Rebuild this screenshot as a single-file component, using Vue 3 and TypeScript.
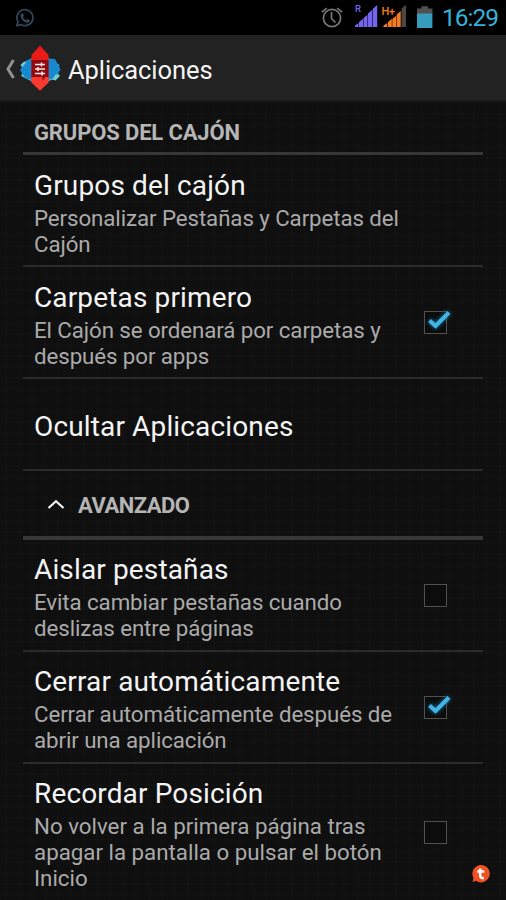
<script setup lang="ts">
interface Pref {
  title: string
  lines?: string[]
  checked?: boolean
}

const drawerPrefs: Pref[] = [
  { title: 'Grupos del cajón', lines: ['Personalizar Pestañas y Carpetas del', 'Cajón'] },
  { title: 'Carpetas primero', lines: ['El Cajón se ordenará por carpetas y', 'después por apps'], checked: true },
  { title: 'Ocultar Aplicaciones' },
]

const advancedPrefs: Pref[] = [
  { title: 'Aislar pestañas', lines: ['Evita cambiar pestañas cuando', 'deslizas entre páginas'], checked: false },
  { title: 'Cerrar automáticamente', lines: ['Cerrar automáticamente después de', 'abrir una aplicación'], checked: true },
  { title: 'Recordar Posición', lines: ['No volver a la primera página tras', 'apagar la pantalla o pulsar el botón', 'Inicio'], checked: false },
]

const groups = [
  { name: 'GRUPOS DEL CAJÓN', advanced: false, prefs: drawerPrefs },
  { name: 'AVANZADO', advanced: true, prefs: advancedPrefs },
]
</script>

<template>
  <div class="screen">
    <div class="status">
      <svg class="whatsapp" width="20" height="20" viewBox="0 0 20 20" fill="none" stroke="#34465c" stroke-width="1.7">
        <path d="M1.9 17.6 3 13.6A8 8 0 1 1 6.2 16.7Z" />
        <path d="M6.2 5.5 7.6 5 9 8 7.9 9.2Q9 11.4 11.2 12.3L12.4 11 15 12.4Q14.6 15 12 14.8C8.6 14.2 5.3 10.2 5.5 7.2Z" fill="#34465c" stroke="none" />
      </svg>
      <svg class="indicators" width="120" height="34" viewBox="0 0 120 34">
        <g fill="none" stroke="#777" stroke-width="1.7">
          <circle cx="12" cy="18" r="8.6" />
          <path d="M11.5 12v6.5l4 4M1.8 12.2l5-4M22.2 12.2l-5-4" />
        </g>
        <text x="35" y="12.3" class="net net-r">R</text>
        <path fill="#7565ee" d="M35 27v-1.5l3.5-2.5V27zM39 27v-5l4-3.3V27zM43.5 27v-9l4-3.3V27zM48 27V13.5l4-3.5V27zM52.6 27V9l4.6-4V27z" />
        <path fill="#f47b22" d="M63.5 27v-1.5l3.8-2.5V27zM68 27v-5l3.8-3.3V27zM72.3 27v-8l3.9-3.3V27zM76.7 27V14.5l4-3.5V27z" />
        <path fill="#4b4543" d="M81.5 27V8.5l4.5-3.8V27z" />
        <text x="61.5" y="14.5" class="net net-h">H+</text>
        <path fill="#51504f" d="M97 8.5h4.5V6.3h6.4v2.2h4.5V14H97z" />
        <path fill="#379dbe" d="M97 13.5h15.4V28H97z" />
      </svg>
      <span class="clock">16:29</span>
    </div>

    <header class="bar">
      <svg class="logo" width="62" height="48" viewBox="0 0 62 48">
        <path d="M13.5 15 8 24l5.5 9" fill="none" stroke="#909090" stroke-width="3" />
        <path d="M32 13 20.5 20l3.5 4.5L21 31l11 5.5zM48 13l11.5 7-3.5 5 4 6-12 5.5z" fill="#57bfca" />
        <path d="M32 13.5l-6 2L20 25l6 9 6 .5zM48 13.5l7 .5 5.500 10.5-5.500 9-7 1z" fill="#1689d0" />
        <path d="M24 16.5l-3.500 3.500 2 2 4-5zM56 29l3.500 2.500-4 4-3.500-1z" fill="#6fcbd0" />
        <path d="M40 .5 48.5 10v27.5L40 45.5 31.5 37.5V10z" fill="#e91b16" />
        <path d="M31.5 31.5h17v6L40 45.5l-8.5-8z" fill="#f93a2e" />
        <path d="M31.5 15h17v17h-3l-3 4v-4h-11z" fill="#8f090f" />
        <path d="M35 19.5h10M35 24h10M35 28.5h10M41.5 17.5v4M38 22v4M42 26.5v4" fill="none" stroke="#f6e9e9" stroke-width="1.5" />
      </svg>
      <h1>Aplicaciones</h1>
    </header>

    <main>
      <section v-for="group in groups" :key="group.name" :class="{ advanced: group.advanced }">
        <h2>
          <svg v-if="group.advanced" width="18" height="11" viewBox="0 0 18 11">
            <path d="M1.5 9 9 2.3 16.5 9" fill="none" stroke="#f2f2f2" stroke-width="2.2" />
          </svg>
          <span>{{ group.name }}</span>
        </h2>
        <div v-for="pref in group.prefs" :key="pref.title" class="pref" :class="{ single: !pref.lines, tall: pref.lines?.length === 3 }">
          <div class="copy">
            <h3>{{ pref.title }}</h3>
            <p v-for="line in pref.lines" :key="line">{{ line }}</p>
          </div>
          <svg v-if="pref.checked !== undefined" class="check" width="40" height="36" viewBox="0 0 40 36">
            <rect x="6.5" y="7.5" width="22" height="22" fill="#0c0c0c" stroke="#505050" />
            <g v-if="pref.checked" fill="none">
              <path class="glow" d="M11.5 16.5 17.5 22 31 8.5" stroke="#117aa8" stroke-width="4" />
              <path d="M11.5 16.5 17.5 22 31 8.5" stroke="#42b4e3" stroke-width="4" />
            </g>
          </svg>
        </div>
      </section>
    </main>

    <svg class="badge" width="20" height="20" viewBox="0 0 20 20">
      <path d="M10 1a8.7 8.7 0 1 1-5 15.8L1.5 18l1-4A8.7 8.7 0 0 1 10 1z" fill="#ee5223" />
      <path d="M9.2 4.5v7.3q0 2.7 3.8 2.2M6.3 7.6h7" fill="none" stroke="#fff" stroke-width="2.5" />
    </svg>
  </div>
</template>

<style>
body {
  margin: 0;
  background: #0f0f0f;
}
</style>

<style scoped>
.screen {
  position: relative;
  width: 506px;
  height: 900px;
  overflow: hidden;
  display: flex;
  flex-direction: column;
  font-family: Roboto, sans-serif;
  color: #f4f4f4;
  background:
    repeating-linear-gradient(90deg, transparent 0 5px, rgba(255, 255, 255, 0.007) 5px 7px, transparent 7px 13px),
    repeating-linear-gradient(0deg, transparent 0 4px, rgba(255, 255, 255, 0.007) 4px 6px, transparent 6px 11px),
    #0f0f0f;
}
.status {
  flex: none;
  height: 35px;
  background: #000;
  display: flex;
  align-items: flex-start;
}
.whatsapp {
  margin: 8px 0 0 15px;
}
.indicators {
  margin-left: 285px;
}
.net {
  font-family: Roboto, sans-serif;
  font-weight: 500;
}
.net-r {
  font-size: 9.5px;
  fill: #7565ee;
}
.net-h {
  font-size: 11px;
  letter-spacing: -0.3px;
  fill: #f47b22;
}
.clock {
  margin-left: 2px;
  font-size: 24.5px;
  letter-spacing: -1px;
  line-height: 36px;
  color: #35b1d8;
  white-space: nowrap;
}
.bar {
  flex: none;
  box-sizing: border-box;
  height: 67px;
  background: #222;
  border-bottom: 2px solid #1a1a1a;
  display: flex;
  align-items: center;
}
.logo {
  margin: 3px 6px 0 0;
}
h1,
h2,
h3,
p {
  margin: 0;
  font-weight: 400;
  white-space: nowrap;
}
h1 {
  font-size: 25.5px;
  letter-spacing: -0.08px;
  line-height: 34px;
  padding-top: 4px;
}
main {
  padding: 0 23px;
}
h2 {
  box-sizing: border-box;
  height: 53px;
  padding: 15px 11px 0;
  font-size: 22px;
  letter-spacing: -0.14px;
  line-height: 32px;
  font-weight: 700;
  color: #b5b5b5;
  border-bottom: 3px solid #373737;
}
.advanced h2 {
  height: 69px;
  letter-spacing: -0.5px;
  padding: 19px 24px 0;
  display: flex;
  gap: 13px;
  border-bottom-width: 4px;
}
h2 svg {
  margin-top: 9px;
}
.pref {
  box-sizing: border-box;
  height: 112px;
  padding: 13px 6px 0 11px;
  display: flex;
  justify-content: space-between;
  border-bottom: 2px solid #2b2b2b;
}
.advanced .pref {
  padding-top: 12px;
}
.pref.single {
  height: 92px;
  padding-top: 30px;
}
.pref.tall {
  height: 138px;
  border-bottom: 0;
}
h3 {
  font-size: 28px;
  letter-spacing: 0.14px;
  line-height: 36px;
}
p {
  font-size: 22.3px;
  letter-spacing: -0.09px;
  line-height: 26px;
  color: #aaa;
}
.tall p {
  letter-spacing: 0;
}
h3 + p {
  margin-top: 1px;
}
.check {
  flex: none;
  margin: 24px 19px 0 0;
}
.advanced .check {
  margin-top: 25px;
}
.advanced .tall .check {
  margin-top: 38px;
}
.glow {
  filter: blur(2px);
}
.badge {
  position: absolute;
  left: 471px;
  top: 864px;
}
</style>
